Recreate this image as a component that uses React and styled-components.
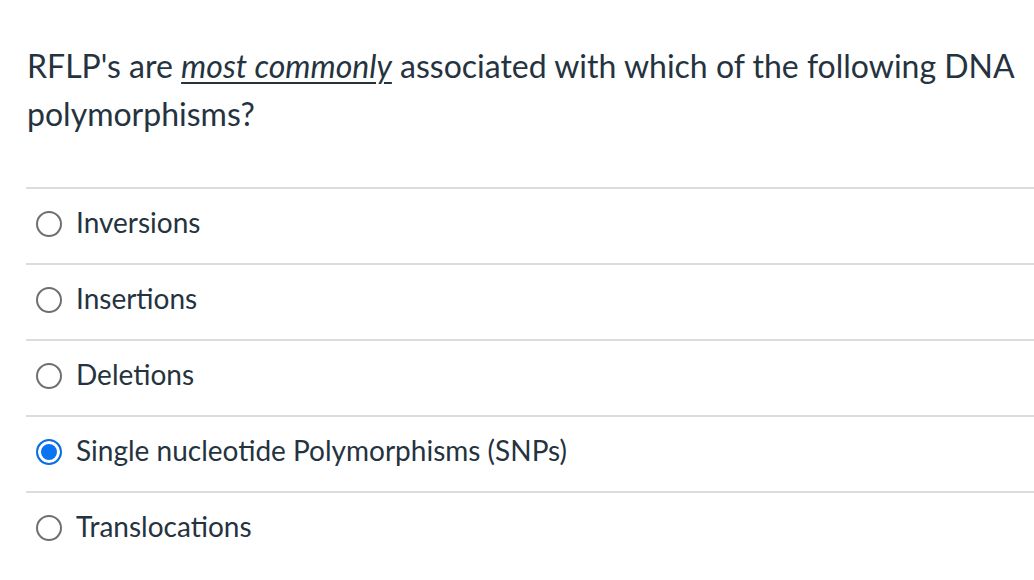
import styled, { createGlobalStyle } from "styled-components";

const GlobalStyle = createGlobalStyle`
  html, body {
    margin: 0;
    padding: 0;
    background: #ffffff;
  }
  body {
    font-family: Lato, "Liberation Sans", sans-serif;
    color: #25333f;
  }
`;

const answers = [
  { id: "a", label: "Inversions" },
  { id: "b", label: "Insertions" },
  { id: "c", label: "Deletions" },
  { id: "d", label: "Single nucleotide Polymorphisms (SNPs)", checked: true },
  { id: "e", label: "Translocations" },
];

export default function App() {
  return (
    <>
      <GlobalStyle />
      <Quiz>
        <Question>
          RFLP's are <Emph>most commonly</Emph> associated with which of the
          following DNA polymorphisms?
        </Question>
        <AnswerList>
          {answers.map((a) => (
            <AnswerRow key={a.id}>
              <Radio $checked={a.checked} />
              <AnswerLabel>{a.label}</AnswerLabel>
            </AnswerRow>
          ))}
        </AnswerList>
      </Quiz>
    </>
  );
}

const Quiz = styled.div`
  padding: 42px 0 0 26px;
`;

const Question = styled.p`
  margin: 0;
  padding-left: 1px;
  padding-right: 12px;
  font-size: 32px;
  line-height: 48px;
  max-width: 1000px;
`;

const Emph = styled.em`
  text-decoration: underline;
  text-decoration-thickness: 2px;
  text-underline-offset: 4px;
`;

const AnswerList = styled.div`
  margin-top: 49px;
  display: flex;
  flex-direction: column;
`;

const AnswerRow = styled.label`
  display: flex;
  align-items: center;
  gap: 14px;
  height: 76px;
  padding-left: 10px;
  padding-bottom: 8px;
  border-top: 2px solid #dcdcdc;
  box-sizing: border-box;
`;

const Radio = styled.span`
  width: 26px;
  height: 26px;
  box-sizing: border-box;
  border-radius: 50%;
  border: 2px solid ${(p) => (p.$checked ? "#0b6fde" : "#6f6f6f")};
  background: ${(p) => (p.$checked ? "#0b74f0" : "#ffffff")};
  box-shadow: ${(p) => (p.$checked ? "inset 0 0 0 3px #ffffff" : "none")};
  flex-shrink: 0;
  margin-top: 4px;
`;

const AnswerLabel = styled.span`
  font-size: 28px;
`;
